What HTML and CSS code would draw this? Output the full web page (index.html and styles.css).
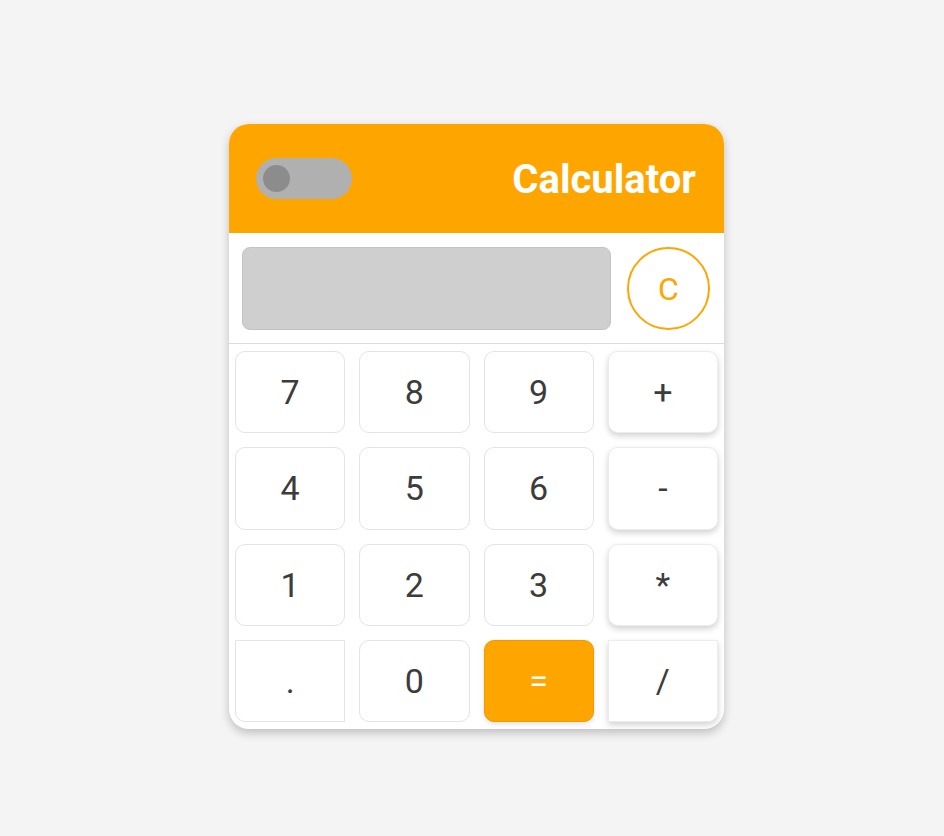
FILE: index.html
```html
<!DOCTYPE html>
<html>
<head>
<meta charset="utf-8">
<link rel="stylesheet" href="styles.css">
</head>
<body>
<div class="calc">
  <div class="header">
    <div class="toggle"><span class="knob"></span></div>
    <div class="title">Calculator</div>
  </div>
  <div class="screen-row">
    <div class="display"></div>
    <button class="clear">C</button>
  </div>
  <div class="keys">
    <button class="key">7</button>
    <button class="key">8</button>
    <button class="key">9</button>
    <button class="key op">+</button>
    <button class="key">4</button>
    <button class="key">5</button>
    <button class="key">6</button>
    <button class="key op">-</button>
    <button class="key">1</button>
    <button class="key">2</button>
    <button class="key">3</button>
    <button class="key op">*</button>
    <button class="key corner-left">.</button>
    <button class="key">0</button>
    <button class="key equals">=</button>
    <button class="key op corner-right">/</button>
  </div>
</div>
</body>
</html>
```
FILE: styles.css
```css
* { box-sizing: border-box; }
html, body { margin: 0; padding: 0; }
body {
  background: #f4f4f4;
  font-family: Roboto, "Liberation Sans", sans-serif;
  display: flex;
  justify-content: center;
  padding-top: 124px;
  padding-left: 9px;
  min-height: 836px;
}
.calc {
  width: 495px;
  background: #fff;
  border-radius: 20px;
  box-shadow: 0 4px 10px rgba(0,0,0,0.22);
  overflow: hidden;
  align-self: flex-start;
}
.header {
  background: #ffa500;
  height: 109px;
  display: flex;
  align-items: center;
  justify-content: space-between;
  padding: 0 28px 0 27px;
}
.toggle {
  width: 96px;
  height: 41px;
  border-radius: 21px;
  background: #b0b0b0;
  display: flex;
  align-items: center;
  padding-left: 7px;
}
.knob {
  width: 27px;
  height: 27px;
  border-radius: 50%;
  background: #8c8c8c;
}
.title {
  color: #fff;
  font-weight: 700;
  font-size: 40px;
  line-height: 1;
  padding-top: 2px;
}
.screen-row {
  display: flex;
  align-items: center;
  padding: 14px 14px 13px 13px;
  gap: 16px;
  border-bottom: 1px solid #dcdcdc;
}
.display {
  width: 369px;
  height: 83px;
  background: #cfcfcf;
  border: 1px solid #c3c3c3;
  border-radius: 8px;
}
.clear {
  width: 83px;
  height: 83px;
  border-radius: 50%;
  border: 2px solid #ffa500;
  background: #fff;
  color: #ffa500;
  font-family: Roboto, "Liberation Sans", sans-serif;
  font-size: 32px;
  padding: 0;
}
.keys {
  display: grid;
  grid-template-columns: repeat(4, 1fr);
  gap: 14px;
  padding: 7px 6px 7px 6px;
}
.key {
  height: 82.3px;
  background: #fff;
  border: 1px solid #e4e4e4;
  border-radius: 10px;
  font-family: Roboto, "Liberation Sans", sans-serif;
  font-size: 34px;
  color: #3c3c3c;
  padding: 0;
}
.op {
  border-color: #ececec;
  box-shadow: 0 3px 6px rgba(0,0,0,0.18);
}
.equals {
  background: #ffa500;
  border-color: #f09a00;
  color: #fff;
  box-shadow: 0 2px 5px rgba(0,0,0,0.12);
}
.corner-left { border-radius: 0 0 0 10px; }
.corner-right { border-radius: 0 0 10px 0; }
```
